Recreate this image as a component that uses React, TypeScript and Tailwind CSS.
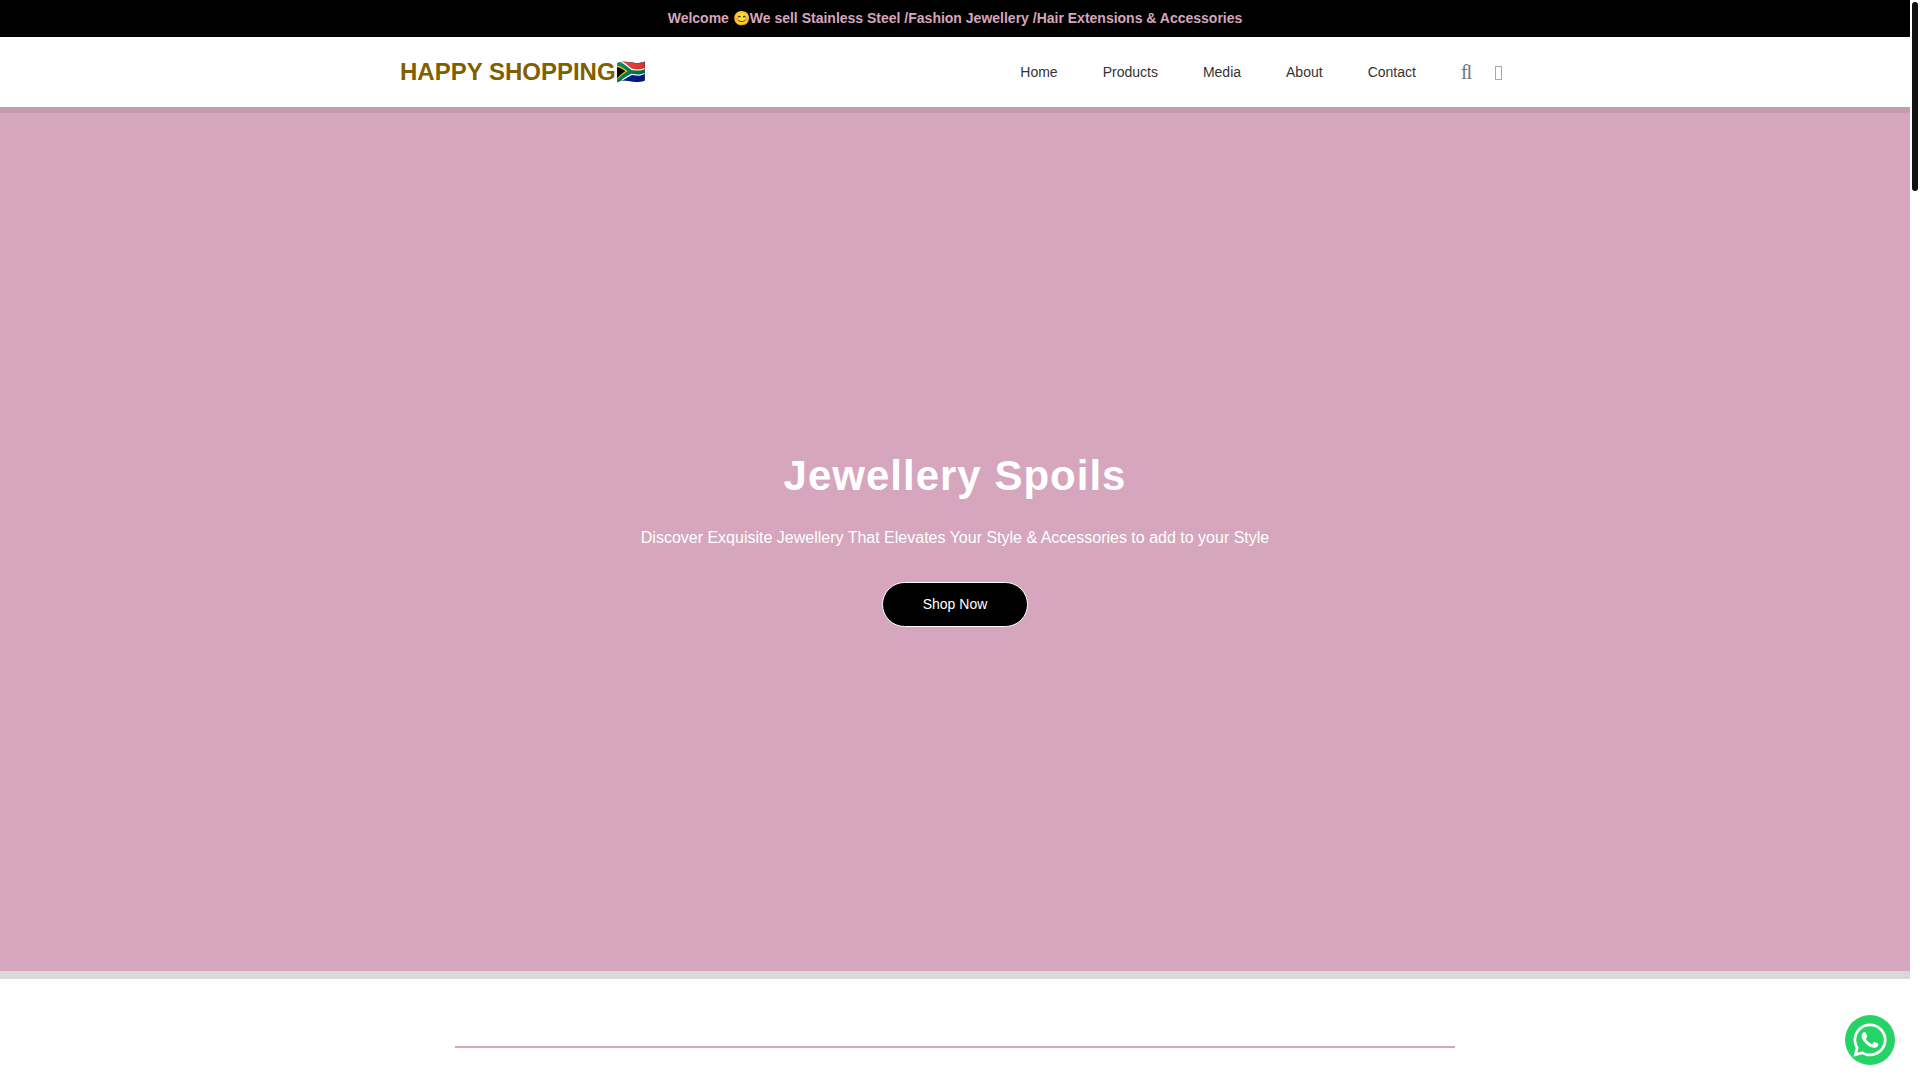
import React from 'react';
import { FaWhatsapp } from 'react-icons/fa';

interface NavItem {
  label: string;
  href: string;
}

const navItems: NavItem[] = [
  { label: 'Home', href: '#home' },
  { label: 'Products', href: '#products' },
  { label: 'Media', href: '#media' },
  { label: 'About', href: '#about' },
  { label: 'Contact', href: '#contact' },
];

function TopBar() {
  return (
    <div className="bg-black py-2 text-center text-sm leading-[21px] font-bold text-[#d5a6bd]">
      Welcome 😊We sell Stainless Steel /Fashion Jewellery /Hair Extensions &amp; Accessories
    </div>
  );
}

function Header() {
  return (
    <header className="relative z-10 bg-white shadow-[0_6px_0_rgba(0,0,0,0.07)]">
      <div className="mx-auto flex h-[70px] max-w-[1110px] items-center justify-between">
        <a href="#home" className="text-2xl font-bold text-[#7f6000]">
          HAPPY SHOPPING🇿🇦
        </a>

        <div className="flex items-center">
          <nav className="flex gap-[45px] text-sm text-[#333]">
            {navItems.map((item) => (
              <a key={item.label} href={item.href}>
                {item.label}
              </a>
            ))}
          </nav>

          {/* Search and cart */}
          <div className="ml-[45px] flex items-center gap-[23px] pr-2 text-[#6c757d]">
            <button
              type="button"
              aria-label="Search"
              className="font-['Liberation_Serif',serif] text-xl leading-6"
            >
              ﬂ
            </button>
            <button type="button" aria-label="Cart" className="mt-0.5 h-3.5 w-[7px] border border-[#a3a9af]" />
          </div>
        </div>
      </div>
    </header>
  );
}

function Hero() {
  return (
    <section
      id="home"
      className="flex h-[80vh] flex-col items-center justify-center bg-[#d5a6bd] text-center text-white shadow-[0_8px_0_#d9d9d9]"
    >
      <h1 className="mb-[26px] text-[42px] leading-[48px] font-bold tracking-[1px]">Jewellery Spoils</h1>
      <p className="mb-8 text-base">
        Discover Exquisite Jewellery That Elevates Your Style &amp; Accessories to add to your Style
      </p>
      <a
        href="#products"
        className="rounded-full border border-white bg-black px-10 py-[11px] text-sm leading-[21px]"
      >
        Shop Now
      </a>
    </section>
  );
}

export default function App() {
  return (
    <div className="flex h-screen overflow-hidden bg-white font-['Liberation_Sans',Arial,sans-serif]">
      <main className="min-w-0 flex-1">
        <TopBar />
        <Header />
        <Hero />
        <section id="products" className="pt-[75px]">
          <hr className="mx-auto h-0.5 max-w-[1000px] border-0 bg-[#d5a6bd]" />
        </section>
      </main>

      {/* Scrollbar */}
      <div className="w-2.5 bg-white p-0.5">
        <div className="h-[189px] rounded-full bg-[#111]" />
      </div>

      <a
        href="#whatsapp"
        aria-label="WhatsApp"
        className="fixed right-[25px] bottom-[15px] z-20 flex size-[50px] items-center justify-center rounded-full bg-[#25d366] text-white"
      >
        <FaWhatsapp className="size-[38px]" />
      </a>
    </div>
  );
}
